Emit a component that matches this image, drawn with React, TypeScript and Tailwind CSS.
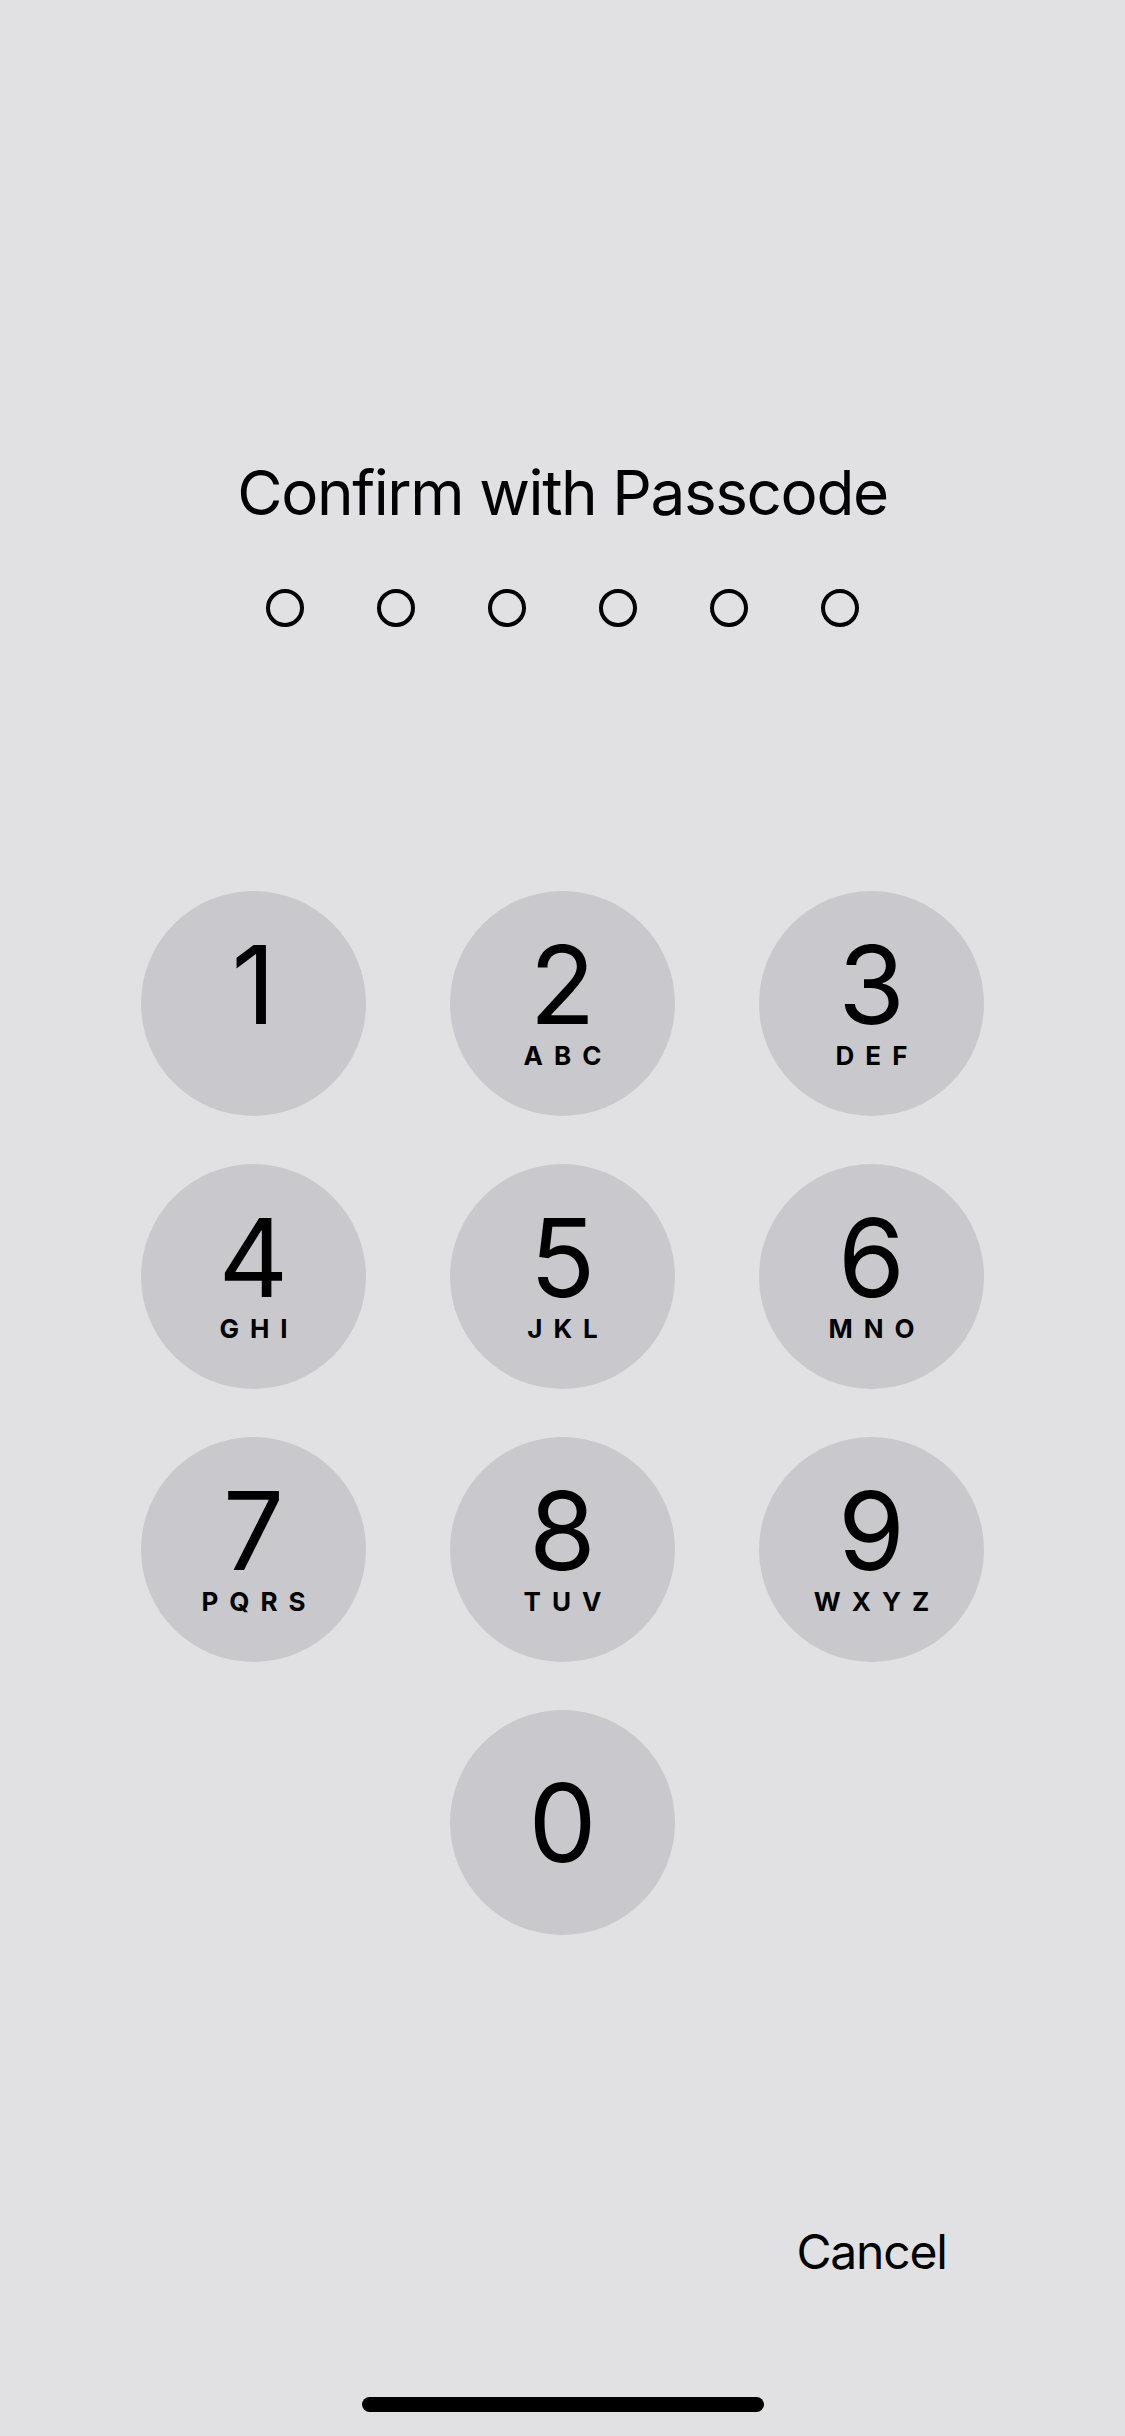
import React from 'react';

interface KeyDef {
  digit: string;
  letters?: string;
}

const KEYS: KeyDef[] = [
  { digit: '1' },
  { digit: '2', letters: 'ABC' },
  { digit: '3', letters: 'DEF' },
  { digit: '4', letters: 'GHI' },
  { digit: '5', letters: 'JKL' },
  { digit: '6', letters: 'MNO' },
  { digit: '7', letters: 'PQRS' },
  { digit: '8', letters: 'TUV' },
  { digit: '9', letters: 'WXYZ' },
];

const Key: React.FC<KeyDef> = ({ digit, letters }) => {
  return (
    <button className="w-[225px] h-[225px] rounded-full bg-[#c9c9cd] flex flex-col items-center pt-[40px] text-black">
      <span className="text-[108px] leading-none h-[108px] font-normal">{digit}</span>
      {letters && (
        <span className="mt-[4px] text-[26px] leading-none font-bold tracking-[11px] pl-[11px]">
          {letters}
        </span>
      )}
    </button>
  );
};

const App: React.FC = () => {
  return (
    <div className="w-[1125px] h-[2436px] bg-[#e1e1e4] flex flex-col items-center font-['Inter',sans-serif] text-black overflow-hidden">
      {/* Title */}
      <h1 className="pt-[462px] text-[62px] leading-none font-normal tracking-[-1.4px]">
        Confirm with Passcode
      </h1>

      {/* Passcode dots */}
      <div className="mt-[65px] flex gap-[73px]">
        {Array.from({ length: 6 }).map((_, i) => (
          <div key={i} className="w-[38px] h-[38px] rounded-full border-[4px] border-black" />
        ))}
      </div>

      {/* Keypad */}
      <div className="mt-[264px] grid grid-cols-[225px_225px_225px] gap-x-[84px] gap-y-[48px]">
        {KEYS.map((k) => (
          <Key key={k.digit} {...k} />
        ))}
        <div />
        <button className="w-[225px] h-[225px] rounded-full bg-[#c9c9cd] flex items-center justify-center text-black">
          <span className="text-[108px] leading-none h-[108px]">0</span>
        </button>
        <div />
      </div>

      {/* Cancel */}
      <div className="mt-[293px] grid grid-cols-[225px_225px_225px] gap-x-[84px]">
        <div />
        <div />
        <button className="text-[48px] leading-none h-[48px] tracking-[-1.2px] text-black text-center">
          Cancel
        </button>
      </div>

      {/* Home indicator */}
      <div className="mt-[121px] w-[402px] h-[15px] rounded-full bg-black" />
    </div>
  );
};

export default App;
